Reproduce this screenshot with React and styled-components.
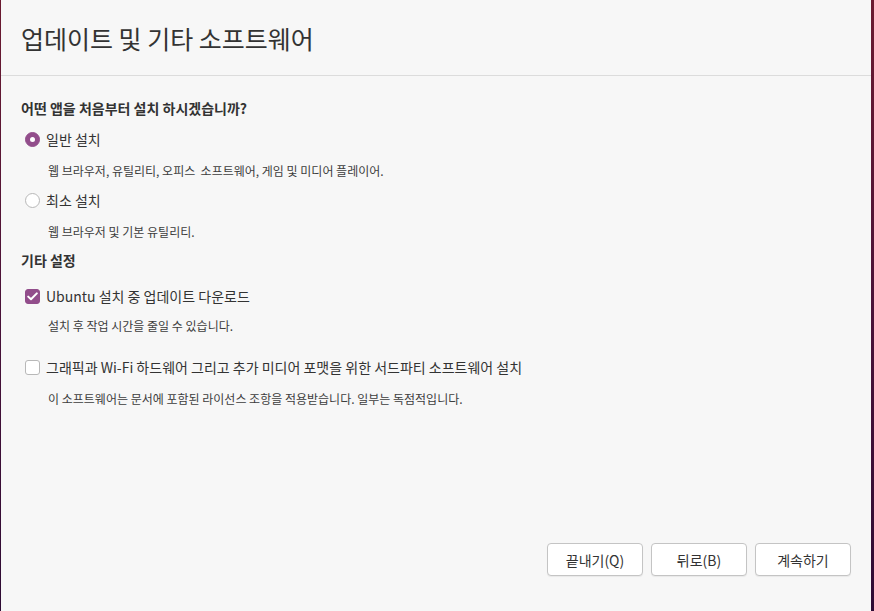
import styled, { createGlobalStyle } from "styled-components";

const Global = createGlobalStyle`
  html, body { margin: 0; padding: 0; }
  body {
    font-family: "Noto Sans CJK KR", "Noto Sans", sans-serif;
    color: #3d3d3d;
  }
  #root { height: 611px; }
`;

const Frame = styled.div`
  height: 611px;
  display: flex;
  background: linear-gradient(180deg, #6b1a30 0%, #4a1238 50%, #2e0b34 100%);
  padding: 0 3px 0 1px;
  box-sizing: border-box;
`;

const Window = styled.div`
  flex: 1;
  background: #f7f7f7;
  display: flex;
  flex-direction: column;
`;

const Header = styled.div`
  height: 76px;
  border-bottom: 1px solid #dcdcdc;
  display: flex;
  align-items: center;
  padding: 0 20px;
  box-sizing: border-box;
`;

const Title = styled.h1`
  margin: 0;
  font-size: 25px;
  font-weight: 400;
  color: #333;
`;

const Body = styled.div`
  flex: 1;
  padding: 22px 20px 0 20px;
  display: flex;
  flex-direction: column;
`;

const Heading = styled.div`
  font-size: 14px;
  font-weight: 700;
  line-height: 20px;
  color: #333;
  margin-top: ${(p) => p.top || 0}px;
`;

const Option = styled.label`
  display: flex;
  align-items: center;
  gap: 6px;
  padding-left: 4px;
  font-size: 14px;
  line-height: 20px;
  margin-top: ${(p) => p.top || 0}px;
  color: #333;
`;

const Radio = styled.span`
  width: 15px;
  height: 15px;
  border-radius: 50%;
  box-sizing: border-box;
  flex-shrink: 0;
  background: ${(p) => (p.on ? "#924d8b" : "#fff")};
  border: 1px solid ${(p) => (p.on ? "#924d8b" : "#b8b8b8")};
  display: flex;
  align-items: center;
  justify-content: center;
  &::after {
    content: "";
    display: ${(p) => (p.on ? "block" : "none")};
    width: 5px;
    height: 5px;
    border-radius: 50%;
    background: #fff;
  }
`;

const Check = styled.span`
  width: 15px;
  height: 15px;
  border-radius: 3px;
  box-sizing: border-box;
  flex-shrink: 0;
  background: ${(p) => (p.on ? "#924d8b" : "#fff")};
  border: 1px solid ${(p) => (p.on ? "#924d8b" : "#b8b8b8")};
  display: flex;
  align-items: center;
  justify-content: center;
`;

const Desc = styled.div`
  font-size: 12px;
  line-height: 16px;
  color: #3d3d3d;
  padding-left: 27px;
  margin-top: ${(p) => p.top || 0}px;
`;

const Footer = styled.div`
  display: flex;
  justify-content: flex-end;
  gap: 8px;
  padding: 0 20px 35px 20px;
`;

const Button = styled.button`
  width: 96px;
  height: 33px;
  border: 1px solid #c4c4c4;
  border-radius: 4px;
  background: #fff;
  font-family: inherit;
  font-size: 14px;
  color: #333;
  box-shadow: 0 1px 1px rgba(0, 0, 0, 0.06);
  cursor: pointer;
`;

export default function App() {
  return (
    <>
      <Global />
      <Frame>
        <Window>
          <Header>
            <Title>업데이트 및 기타 소프트웨어</Title>
          </Header>
          <Body>
            <Heading>어떤 앱을 처음부터 설치 하시겠습니까?</Heading>
            <Option top={11}>
              <Radio on />
              일반 설치
            </Option>
            <Desc top={14}>웹 브라우저, 유틸리티, 오피스&nbsp;&nbsp;소프트웨어, 게임 및 미디어 플레이어.</Desc>
            <Option top={11}>
              <Radio />
              최소 설치
            </Option>
            <Desc top={14}>웹 브라우저 및 기본 유틸리티.</Desc>
            <Heading top={10}>기타 설정</Heading>
            <Option top={16}>
              <Check on>
                <svg width="11" height="9" viewBox="0 0 11 9">
                  <path d="M1.2 4.6 L4 7.3 L9.8 1.4" fill="none" stroke="#fff" strokeWidth="2" strokeLinecap="round" strokeLinejoin="round" />
                </svg>
              </Check>
              Ubuntu 설치 중 업데이트 다운로드
            </Option>
            <Desc top={12}>설치 후 작업 시간을 줄일 수 있습니다.</Desc>
            <Option top={23}>
              <Check />
              그래픽과 Wi-Fi 하드웨어 그리고 추가 미디어 포맷을 위한 서드파티 소프트웨어 설치
            </Option>
            <Desc top={14}>이 소프트웨어는 문서에 포함된 라이선스 조항을 적용받습니다. 일부는 독점적입니다.</Desc>
          </Body>
          <Footer>
            <Button>끝내기(Q)</Button>
            <Button>뒤로(B)</Button>
            <Button>계속하기</Button>
          </Footer>
        </Window>
      </Frame>
    </>
  );
}
